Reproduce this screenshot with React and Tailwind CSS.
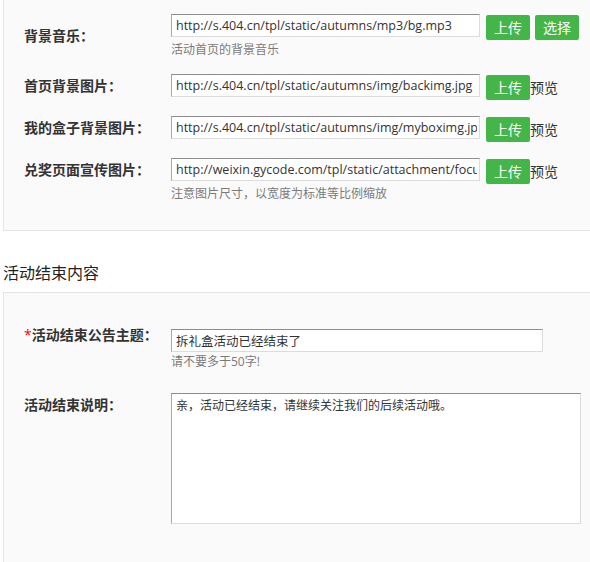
import React from 'react';

const font = { fontFamily: '"Open Sans", "Noto Sans CJK SC", sans-serif' };

const inputCls =
  'h-[23px] border border-[#dcdcdc] border-t-[#8c8c8c] border-l-[#a8a8a8] bg-white pl-[4px] pr-[2px] text-[12.5px] text-[#333] outline-none';

const labelCls = 'w-[147px] shrink-0 text-[14px] font-bold leading-[20px] text-[#333]';

const helpCls = 'mt-[2px] text-[12px] leading-[16px] text-[#7a7a7a]';

const GreenButton = ({ children }) => (
  <button className="h-[25px] w-[44px] rounded-[2px] bg-[#44b549] text-[14px] leading-[25px] text-white">
    {children}
  </button>
);

const UploadRow = ({ label, value, help }) => (
  <div className="mb-[16px] flex items-start">
    <div className={`${labelCls} pt-[2px]`}>{label}</div>
    <div>
      <div className="flex h-[26px] items-start">
        <input className={`${inputCls} w-[309px]`} defaultValue={value} readOnly />
        <div className="ml-[6px] mt-[1px] flex items-center">
          <GreenButton>上传</GreenButton>
          <span className="text-[14px] leading-[20px] text-[#333]">预览</span>
        </div>
      </div>
      {help && <div className={helpCls}>{help}</div>}
    </div>
  </div>
);

export default function App() {
  return (
    <div className="w-full overflow-hidden bg-white" style={font}>
      {/* 上半部分：素材设置 */}
      <div className="ml-[3px] w-[600px] border border-t-0 border-[#e6e6e6] bg-[#fafafa] pb-[12px] pl-[20px] pt-[14px]">
        <div className="mb-[16px] flex items-start">
          <div className={`${labelCls} pt-[12px]`}>背景音乐：</div>
          <div>
            <div className="flex h-[26px] items-start">
              <input className={`${inputCls} w-[309px]`} defaultValue="http://s.404.cn/tpl/static/autumns/mp3/bg.mp3" readOnly />
              <div className="ml-[6px] mt-[1px] flex gap-[5px]">
                <GreenButton>上传</GreenButton>
                <GreenButton>选择</GreenButton>
              </div>
            </div>
            <div className={helpCls}>活动首页的背景音乐</div>
          </div>
        </div>

        <UploadRow label="首页背景图片：" value="http://s.404.cn/tpl/static/autumns/img/backimg.jpg" />
        <UploadRow label="我的盒子背景图片：" value="http://s.404.cn/tpl/static/autumns/img/myboximg.jpg" />
        <UploadRow
          label="兑奖页面宣传图片："
          value="http://weixin.gycode.com/tpl/static/attachment/focus.jpg"
          help="注意图片尺寸，以宽度为标准等比例缩放"
        />
      </div>

      {/* 活动结束内容 */}
      <h3 className="ml-[3px] mt-[31px] text-[16px] leading-[22px] text-[#222]">活动结束内容</h3>

      <div className="ml-[3px] mt-[8px] w-[600px] border border-[#e6e6e6] bg-[#fafafa] pb-[40px] pl-[20px] pt-[35px]">
        <div className="flex items-start">
          <div className={`${labelCls} -mt-[3px] leading-[14px]`}>
            <span className="font-normal text-[#f00]">*</span>活动结束公告主题：
          </div>
          <div>
            <input className={`${inputCls} w-[372px]`} defaultValue="拆礼盒活动已经结束了" readOnly />
            <div className={helpCls}>请不要多于50字!</div>
          </div>
        </div>

        <div className="mt-[23px] flex items-start">
          <div className={`${labelCls} pt-[2px]`}>活动结束说明：</div>
          <textarea
            className="h-[131px] w-[410px] resize-none border border-[#dcdcdc] border-t-[#8c8c8c] border-l-[#a8a8a8] bg-white px-[4px] py-[3px] text-[12px] leading-[18px] text-[#333] outline-none"
            defaultValue="亲，活动已经结束，请继续关注我们的后续活动哦。"
            readOnly
          />
        </div>
      </div>
    </div>
  );
}
